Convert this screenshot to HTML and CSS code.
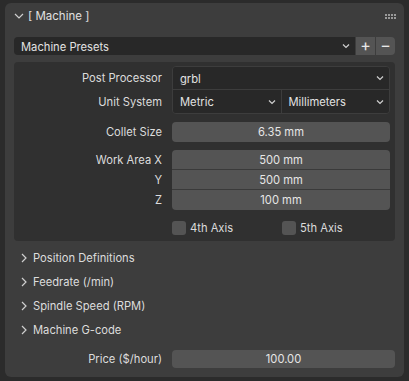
FILE: index.html
```html
<!DOCTYPE html>
<html>
	<head>
		<meta charset="UTF-8">
		<title>Machine</title>
		<link rel="stylesheet" href="styles.css">
	</head>
	<body>
		<div class="panel">
			<div class="panel-head">
				<svg class="chev" width="10" height="10" viewBox="0 0 10 10"><path d="M1 3 L5 7 L9 3" fill="none" stroke="#cfcfcf" stroke-width="1.2"/></svg>
				<span class="title">[ Machine ]</span>
				<svg class="grip" width="12" height="6" viewBox="0 0 12 6"><g fill="#9a9a9a"><rect x="0" y="0" width="2" height="2"/><rect x="3" y="0" width="2" height="2"/><rect x="6" y="0" width="2" height="2"/><rect x="9" y="0" width="2" height="2"/><rect x="0" y="3" width="2" height="2"/><rect x="3" y="3" width="2" height="2"/><rect x="6" y="3" width="2" height="2"/><rect x="9" y="3" width="2" height="2"/></g></svg>
			</div>
			<div class="presets">
				<div class="select preset-sel">
					<span>Machine Presets</span>
					<svg width="8" height="8" viewBox="0 0 8 8"><path d="M1 2.5 L4 5.5 L7 2.5" fill="none" stroke="#d0d0d0" stroke-width="1.2"/></svg>
				</div>
				<div class="btn">+</div>
				<div class="btn">&minus;</div>
			</div>
			<div class="box">
				<div class="prop">
					<label>Post Processor</label>
					<div class="select-group">
						<div class="select">
							<span>grbl</span>
							<svg width="8" height="8" viewBox="0 0 8 8"><path d="M1 2.5 L4 5.5 L7 2.5" fill="none" stroke="#d0d0d0" stroke-width="1.2"/></svg>
						</div>
						<div class="select-row">
							<div class="select">
								<span>Metric</span>
								<svg width="8" height="8" viewBox="0 0 8 8"><path d="M1 2.5 L4 5.5 L7 2.5" fill="none" stroke="#d0d0d0" stroke-width="1.2"/></svg>
							</div>
							<div class="select">
								<span>Millimeters</span>
								<svg width="8" height="8" viewBox="0 0 8 8"><path d="M1 2.5 L4 5.5 L7 2.5" fill="none" stroke="#d0d0d0" stroke-width="1.2"/></svg>
							</div>
						</div>
					</div>
				</div>
				<div class="prop unit-label">
					<label>Unit System</label>
				</div>
				<div class="prop collet">
					<label>Collet Size</label>
					<div class="num">6.35 mm</div>
				</div>
				<div class="prop work">
					<div class="labels">
						<label>Work Area X</label>
						<label>Y</label>
						<label>Z</label>
					</div>
					<div class="num-group">
						<div class="num">500 mm</div>
						<div class="num">500 mm</div>
						<div class="num">100 mm</div>
					</div>
				</div>
				<div class="prop checks">
					<label></label>
					<div class="check-row">
						<div class="check"><span class="box-tick"></span>4th Axis</div>
						<div class="check"><span class="box-tick"></span>5th Axis</div>
					</div>
				</div>
			</div>
			<ul class="subpanels">
				<li><svg width="8" height="10" viewBox="0 0 8 10"><path d="M2 1 L6 5 L2 9" fill="none" stroke="#cfcfcf" stroke-width="1.2"/></svg>Position Definitions</li>
				<li><svg width="8" height="10" viewBox="0 0 8 10"><path d="M2 1 L6 5 L2 9" fill="none" stroke="#cfcfcf" stroke-width="1.2"/></svg>Feedrate (/min)</li>
				<li><svg width="8" height="10" viewBox="0 0 8 10"><path d="M2 1 L6 5 L2 9" fill="none" stroke="#cfcfcf" stroke-width="1.2"/></svg>Spindle Speed (RPM)</li>
				<li><svg width="8" height="10" viewBox="0 0 8 10"><path d="M2 1 L6 5 L2 9" fill="none" stroke="#cfcfcf" stroke-width="1.2"/></svg>Machine G-code</li>
			</ul>
			<div class="prop price">
				<label>Price ($/hour)</label>
				<div class="num">100.00</div>
			</div>
		</div>
	</body>
</html>
```

FILE: styles.css
```css
*{
	margin:0;
	padding:0;
	box-sizing: border-box;
}
body{
	background: #2b2b2b;
	font-family: Inter, "DejaVu Sans", sans-serif;
	font-size: 11.2px;
	color: #dcdcdc;
	width: 409px;
	height: 381px;
	overflow: hidden;
}
.panel{
	margin: 3px 5px 0 5px;
	height: 374px;
	background: #3d3d3d;
	border-radius: 6px;
	padding: 0 9px;
}
.panel-head{
	height: 26px;
	display: flex;
	align-items: center;
}
.chev{
	margin-right: 4px;
}
.title{
	font-size: 11.5px;
	color: #e0e0e0;
	flex: 1;
}
.grip{
	margin-right: -2px;
	margin-top: 1px;
}
.presets{
	margin-top: 8px;
	display: flex;
	height: 18px;
	gap: 1px;
}
.select{
	display: flex;
	align-items: center;
	justify-content: space-between;
	background: #282828;
	padding: 0 5px 0 7px;
	color: #e2e2e2;
}
.select span{
	padding-top: 1px;
}
.preset-sel{
	flex: 1;
	border-radius: 4px 0 0 4px;
}
.btn{
	width: 19px;
	background: #545454;
	color: #e8e8e8;
	text-align: center;
	font-size: 16px;
	line-height: 17px;
}
.btn:last-child{
	border-radius: 0 4px 4px 0;
}
.box{
	margin-top: 7px;
	background: #303030;
	border-radius: 4px;
	padding: 4px 5px 6px 0;
	height: 179px;
}
.prop{
	display: grid;
	grid-template-columns: 148px 1fr;
	column-gap: 10px;
}
.prop label{
	text-align: right;
	display: block;
	height: 23px;
	line-height: 25px;
}
.select-group{
	border: 1px solid #3d3d3d;
	border-radius: 4px;
	overflow: hidden;
	height: 48px;
}
.select-group > .select{
	height: 23px;
	border-bottom: 1px solid #3d3d3d;
}
.select-row{
	display: flex;
	height: 23px;
}
.select-row .select{
	flex: 1;
}
.select-row .select:first-child{
	border-right: 1px solid #3d3d3d;
}
.unit-label{
	margin-top: -24px;
}
.num{
	background: #545454;
	border-radius: 4px;
	text-align: center;
	height: 20px;
	line-height: 21px;
	color: #e6e6e6;
}
.collet{
	margin-top: 9px;
}
.collet label,
.labels label{
	height: 20px;
	line-height: 21px;
}
.work{
	margin-top: 8px;
}
.num-group .num{
	border-radius: 0;
	border-bottom: 1px solid #3a3a3a;
}
.num-group .num:first-child{
	border-radius: 4px 4px 0 0;
}
.num-group .num:last-child{
	border-radius: 0 0 4px 4px;
	border-bottom: none;
}
.checks{
	margin-top: 11px;
}
.checks label{
	height: 14px;
}
.check-row{
	display: flex;
}
.check{
	width: 110px;
	display: flex;
	align-items: center;
	height: 14px;
}
.box-tick{
	width: 14px;
	height: 14px;
	background: #545454;
	border-radius: 3px;
	margin-right: 4px;
}
.subpanels{
	list-style: none;
	margin-top: 5px;
}
.subpanels li{
	height: 24px;
	display: flex;
	align-items: center;
	padding-left: 6px;
}
.subpanels li svg{
	margin-right: 5px;
}
.price{
	margin-top: 8px;
}
.price label{
	height: 18px;
	line-height: 19px;
}
.price .num{
	height: 18px;
	line-height: 19px;
}
```
